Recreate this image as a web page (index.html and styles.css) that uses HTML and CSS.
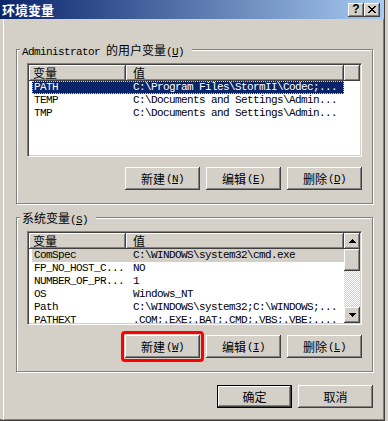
FILE: index.html
```html
<!DOCTYPE html>
<html lang="zh-CN">
<head>
<meta charset="utf-8">
<title>环境变量</title>
<link rel="stylesheet" href="styles.css">
</head>
<body>
<div class="window">
  <div class="titlebar">
    <span class="title">环境变量</span>
    <div class="caption-btns">
      <span class="cbtn help">?</span>
      <span class="cbtn close">
        <svg width="8" height="7" viewBox="0 0 8 7" shape-rendering="crispEdges">
          <path d="M0 0h2v1H0zM6 0h2v1H6zM1 1h2v1H1zM5 1h2v1H5zM2 2h4v1H2zM3 3h2v1H3zM2 4h4v1H2zM1 5h2v1H1zM5 5h2v1H5zM0 6h2v1H0zM6 6h2v1H6z" fill="#000"/>
        </svg>
      </span>
    </div>
  </div>
  <div class="client">
    <fieldset class="group">
      <legend><span class="m">Administrator </span>的用户变量<span class="m">(<u>U</u>)</span></legend>
      <div class="group-body">
        <div class="list">
          <div class="list-main">
            <div class="lv-head">
              <div class="hcell c1">变量</div>
              <div class="hcell c2">值</div>
              <div class="hcell fill"></div>
            </div>
            <div class="row sel focus m"><span class="cell1">PATH</span><span class="cell2">C:\Program Files\StormII\Codec;...</span></div>
            <div class="row m"><span class="cell1">TEMP</span><span class="cell2">C:\Documents and Settings\Admin...</span></div>
            <div class="row m"><span class="cell1">TMP</span><span class="cell2">C:\Documents and Settings\Admin...</span></div>
          </div>
        </div>
        <div class="btnrow">
          <button class="btn">新建<span class="m mn">(<u>N</u>)</span></button>
          <button class="btn">编辑<span class="m mn">(<u>E</u>)</span></button>
          <button class="btn">删除<span class="m mn">(<u>D</u>)</span></button>
        </div>
      </div>
    </fieldset>
    <fieldset class="group g2">
      <legend>系统变量<span class="m">(<u>S</u>)</span></legend>
      <div class="group-body">
        <div class="list">
          <div class="list-main">
            <div class="lv-head">
              <div class="hcell c1">变量</div>
              <div class="hcell c2">值</div>
            </div>
            <div class="row sel-grey m"><span class="cell1">ComSpec</span><span class="cell2">C:\WINDOWS\system32\cmd.exe</span></div>
            <div class="row m"><span class="cell1">FP_NO_HOST_C...</span><span class="cell2">NO</span></div>
            <div class="row m"><span class="cell1">NUMBER_OF_PR...</span><span class="cell2">1</span></div>
            <div class="row m"><span class="cell1">OS</span><span class="cell2">Windows_NT</span></div>
            <div class="row m"><span class="cell1">Path</span><span class="cell2">C:\WINDOWS\system32;C:\WINDOWS;...</span></div>
            <div class="row m"><span class="cell1">PATHEXT</span><span class="cell2">.COM;.EXE;.BAT;.CMD;.VBS;.VBE;....</span></div>
          </div>
          <div class="scrollbar">
            <div class="sb-btn">
              <svg width="7" height="4" viewBox="0 0 7 4" shape-rendering="crispEdges"><path d="M3 0h1v1H3zM2 1h3v1H2zM1 2h5v1H1zM0 3h7v1H0z" fill="#000"/></svg>
            </div>
            <div class="sb-thumb"></div>
            <div class="sb-track"></div>
            <div class="sb-btn">
              <svg width="7" height="4" viewBox="0 0 7 4" shape-rendering="crispEdges"><path d="M0 0h7v1H0zM1 1h5v1H1zM2 2h3v1H2zM3 3h1v1H3z" fill="#000"/></svg>
            </div>
          </div>
        </div>
        <div class="btnrow">
          <button class="btn marked">新建<span class="m mn">(<u>W</u>)</span></button>
          <button class="btn">编辑<span class="m mn">(<u>I</u>)</span></button>
          <button class="btn">删除<span class="m mn">(<u>L</u>)</span></button>
        </div>
      </div>
    </fieldset>
    <div class="footer">
      <button class="btn default">确定</button>
      <button class="btn">取消</button>
    </div>
  </div>
</div>
</body>
</html>
```
FILE: styles.css
```css
html, body {
  margin: 0;
  padding: 0;
}
body {
  width: 388px;
  height: 421px;
  overflow: hidden;
  background: #d4d0c8;
  font-family: "Noto Sans CJK SC", sans-serif;
  font-size: 12px;
  color: #000;
}
.m {
  font-family: "Liberation Mono", "Noto Sans CJK SC", monospace;
  font-size: 11px;
  letter-spacing: -0.6px;
}
.window {
  width: 385px;
  height: 421px;
  box-sizing: border-box;
  border-right: 1px solid #404040;
  border-bottom: 1px solid #404040;
  box-shadow: inset -1px -1px 0 #808080;
  display: flex;
  flex-direction: column;
}
.titlebar {
  height: 19px;
  flex: none;
  background: linear-gradient(to right, #0a246a, #a6caf0);
  display: flex;
  align-items: center;
  justify-content: space-between;
  padding: 0 4px 0 2px;
}
.title {
  color: #fff;
  font-weight: bold;
  font-size: 13px;
  line-height: 19px;
}
.caption-btns {
  display: flex;
}
.cbtn {
  width: 16px;
  height: 14px;
  box-sizing: border-box;
  background: #d4d0c8;
  box-shadow: inset -1px -1px 0 #404040, inset 1px 1px 0 #fff, inset -2px -2px 0 #808080;
  display: flex;
  align-items: center;
  justify-content: center;
}
.help {
  font-family: "Liberation Sans", sans-serif;
  font-weight: bold;
  font-size: 12px;
  line-height: 14px;
  padding-bottom: 1px;
}
.close svg {
  margin-top: -1px;
}
.client {
  flex: 1;
  margin-left: 3px;
  border-left: 1px solid #fff;
  padding: 24px 0 0 12px;
}
.group {
  margin: 0;
  padding: 0;
  width: 357px;
  box-sizing: border-box;
  border: 1px solid #808080;
  box-shadow: 1px 1px 0 #fff, inset 1px 1px 0 #fff;
  min-inline-size: 0;
}
.group legend {
  margin-left: 3px;
  padding: 0 8px 0 2px;
  height: 13px;
  line-height: 13px;
  background: #d4d0c8;
  white-space: nowrap;
}
.g2 {
  margin-top: 7px;
}
.group-body {
  padding: 7px 10px 13px 10px;
}
.list {
  height: 94px;
  box-sizing: border-box;
  border: 1px solid;
  border-color: #808080 #fff #fff #808080;
  box-shadow: inset 1px 1px 0 #404040, inset -1px -1px 0 #d4d0c8;
  background: #fff;
  padding: 1px;
  display: flex;
  overflow: hidden;
}
.list-main {
  flex: 1;
  display: flex;
  flex-direction: column;
  overflow: hidden;
}
.lv-head {
  display: flex;
  height: 16px;
  flex: none;
}
.hcell {
  box-sizing: border-box;
  height: 16px;
  line-height: 16px;
  background: #d4d0c8;
  box-shadow: inset -1px -1px 0 #404040, inset 1px 1px 0 #fff, inset -2px -2px 0 #808080;
  white-space: nowrap;
}
.hcell.c1 {
  width: 97px;
  padding-left: 4px;
}
.hcell.c2 {
  width: 218px;
  padding-left: 7px;
}
.hcell.fill {
  flex: 1;
}
.row {
  display: flex;
  flex: none;
  height: 13px;
  line-height: 13px;
  margin-left: 3px;
  width: 312px;
  white-space: nowrap;
}
.cell1 {
  width: 92px;
  padding-left: 2px;
  overflow: hidden;
}
.cell2 {
  flex: 1;
  padding-left: 7px;
  overflow: hidden;
}
.sel {
  background: #0a246a;
  color: #fff;
}
.focus {
  outline: 1px dotted #d4d0c8;
  outline-offset: -1px;
}
.sel-grey {
  background: #d4d0c8;
}
.scrollbar {
  width: 16px;
  flex: none;
  display: flex;
  flex-direction: column;
}
.sb-btn, .sb-thumb {
  background: #d4d0c8;
  box-shadow: inset -1px -1px 0 #404040, inset 1px 1px 0 #fff, inset -2px -2px 0 #808080;
}
.sb-btn {
  height: 16px;
  flex: none;
  display: flex;
  align-items: center;
  justify-content: center;
}
.sb-thumb {
  height: 22px;
  flex: none;
}
.sb-track {
  flex: 1;
  background: repeating-conic-gradient(#fff 0 25%, #d4d0c8 0 50%) 0 0 / 2px 2px;
}
.btnrow {
  display: flex;
  justify-content: flex-end;
  gap: 6px;
  margin-top: 10px;
}
.btn {
  width: 75px;
  height: 23px;
  margin: 0;
  padding: 0;
  border: 0;
  box-sizing: border-box;
  background: #d4d0c8;
  box-shadow: inset -1px -1px 0 #404040, inset 1px 1px 0 #fff, inset -2px -2px 0 #808080;
  font-family: "Noto Sans CJK SC", sans-serif;
  font-size: 12px;
  line-height: 14px;
  color: #000;
  display: flex;
  align-items: center;
  justify-content: center;
}
.mn {
  margin-left: 1px;
}
.btn.default {
  box-shadow: inset 0 0 0 1px #000, inset -2px -2px 0 #404040, inset 2px 2px 0 #fff, inset -3px -3px 0 #808080;
}
.btn.marked {
  position: relative;
}
.btn.marked::after {
  content: "";
  position: absolute;
  left: -4px;
  top: -4px;
  right: -4px;
  bottom: -4px;
  border: 3px solid #f00;
  border-radius: 4px;
}
.footer {
  width: 357px;
  display: flex;
  justify-content: flex-end;
  gap: 6px;
  margin-top: 13px;
}
```
